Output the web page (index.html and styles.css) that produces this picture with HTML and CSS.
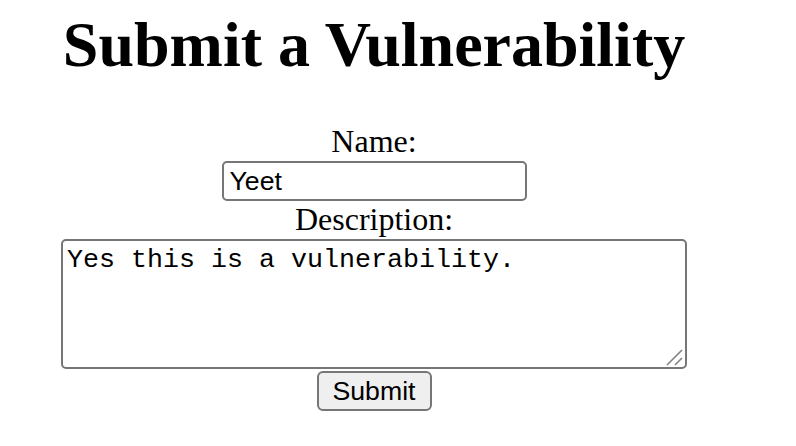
FILE: index.html
```html
<!DOCTYPE html>
<html>
<head>
<meta charset="utf-8">
<title>Submit a Vulnerability</title>
<link rel="stylesheet" href="styles.css">
</head>
<body>
<div class="page">
  <h1 class="title">Submit a Vulnerability</h1>
  <form class="form">
    <label class="label" for="name">Name:</label>
    <input class="text-input" id="name" type="text" value="Yeet">
    <label class="label" for="desc">Description:</label>
    <div class="area-wrap">
      <textarea class="text-area" id="desc">Yes this is a vulnerability.</textarea>
      <svg class="grip" width="18" height="18" viewBox="0 0 18 18" aria-hidden="true">
        <line x1="1" y1="16" x2="16" y2="1" stroke="#808080" stroke-width="1.6"/>
        <line x1="9" y1="16" x2="16" y2="9" stroke="#808080" stroke-width="1.6"/>
      </svg>
    </div>
    <button class="submit" type="button">Submit</button>
  </form>
</div>
</body>
</html>
```

FILE: styles.css
```css
html, body {
  margin: 0;
  padding: 0;
  background: #ffffff;
}

body {
  font-family: "Liberation Serif", "Times New Roman", serif;
  color: #000000;
}

.page {
  width: 626px;
  margin-left: 61px;
  padding-top: 9px;
}

.title {
  margin: 0 0 43px;
  font-size: 64px;
  line-height: 71px;
  font-weight: bold;
  text-align: center;
  white-space: nowrap;
}

.form {
  display: flex;
  flex-direction: column;
  align-items: center;
  margin: 0;
}

.label {
  display: block;
  font-size: 32px;
  line-height: 36px;
  text-align: center;
}

.text-input {
  box-sizing: border-box;
  width: 305px;
  height: 40px;
  margin: 2px 0 0;
  padding: 2px 6px;
  border: 2px solid #767676;
  border-radius: 5px;
  background: #ffffff;
  font-family: "Liberation Sans", Arial, sans-serif;
  font-size: 26.67px;
  color: #000000;
  outline: none;
}

.area-wrap {
  position: relative;
  width: 626px;
  height: 130px;
  margin-top: 2px;
}

.text-area {
  display: block;
  box-sizing: border-box;
  width: 626px;
  height: 130px;
  margin: 0;
  padding: 4px;
  border: 2px solid #767676;
  border-radius: 5px;
  background: #ffffff;
  font-family: "Liberation Mono", "Courier New", monospace;
  font-size: 26.67px;
  color: #000000;
  resize: none;
  outline: none;
}

.grip {
  position: absolute;
  right: 3px;
  bottom: 2px;
  pointer-events: none;
}

.submit {
  box-sizing: border-box;
  width: 115px;
  height: 40px;
  margin: 2px 0 0;
  padding: 2px 12px;
  border: 2px solid #767676;
  border-radius: 6px;
  background: #efefef;
  font-family: "Liberation Sans", Arial, sans-serif;
  font-size: 26.67px;
  color: #000000;
}
```
